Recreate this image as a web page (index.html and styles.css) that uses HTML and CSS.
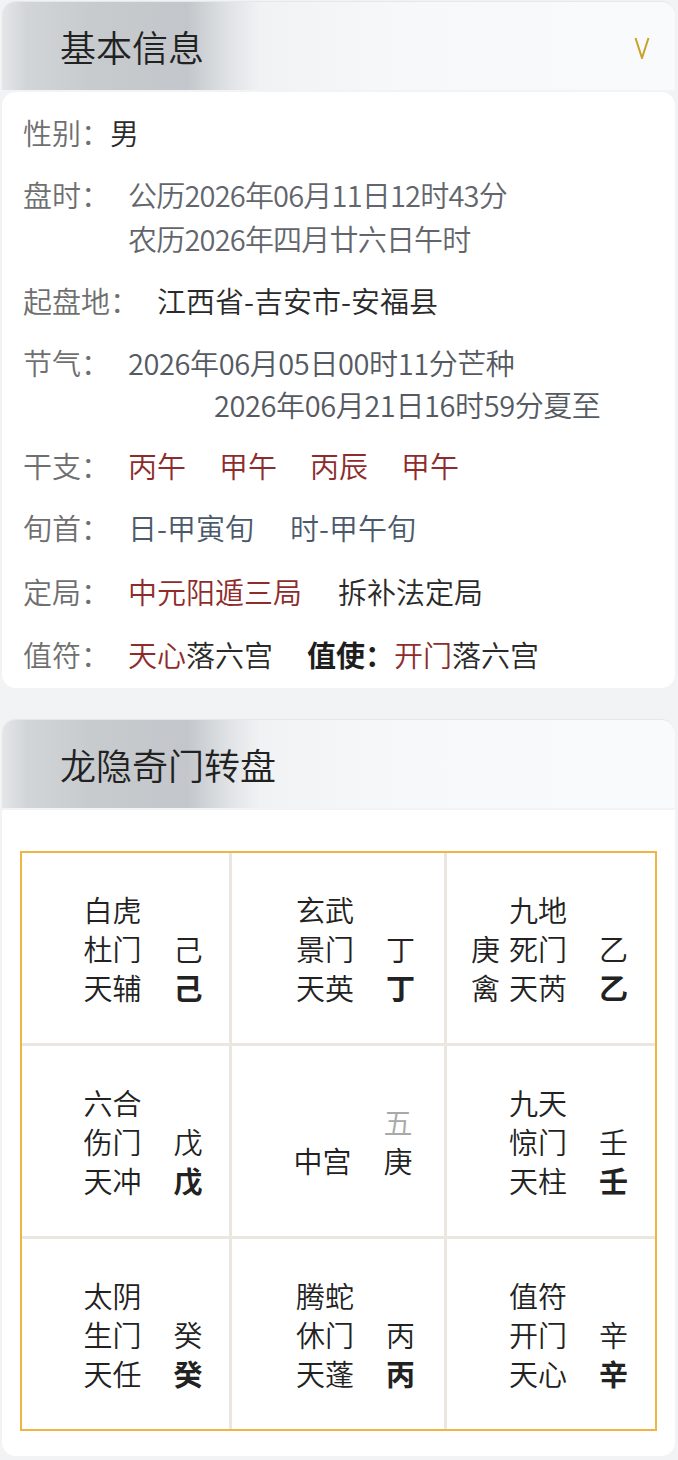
FILE: index.html
```html
<!DOCTYPE html>
<html lang="zh-CN">
<head>
<meta charset="utf-8">
<title>奇门</title>
<link rel="stylesheet" href="styles.css">
</head>
<body>
<div class="page">
  <section class="panel">
    <header class="panel-head">
      <h2>基本信息</h2>
      <svg class="chev" width="16" height="22" viewBox="0 0 16 22"><polyline points="1.5,1 8,21 14.5,1" fill="none" stroke="#c9a227" stroke-width="2"/></svg>
    </header>
    <div class="info">
      <div class="row"><span class="label">性别：</span><span class="val dark tight">男</span></div>
      <div class="row"><span class="label">盘时：</span>
        <div class="val grey date1"><div>公历2026年06月11日12时43分</div><div>农历2026年四月廿六日午时</div></div>
      </div>
      <div class="row"><span class="label">起盘地：</span><span class="val dark">江西省-吉安市-安福县</span></div>
      <div class="row"><span class="label">节气：</span>
        <div class="val slate date2"><div>2026年06月05日00时11分芒种</div><div class="indent">2026年06月21日16时59分夏至</div></div>
      </div>
      <div class="row"><span class="label">干支：</span>
        <div class="val red gz"><span>丙午</span><span>甲午</span><span>丙辰</span><span>甲午</span></div>
      </div>
      <div class="row"><span class="label">旬首：</span>
        <div class="val blue xs"><span>日-甲寅旬</span><span>时-甲午旬</span></div>
      </div>
      <div class="row row-dj"><span class="label">定局：</span>
        <div class="val dj"><span class="red">中元阳遁三局</span><span class="dark">拆补法定局</span></div>
      </div>
      <div class="row row-zf"><span class="label">值符：</span>
        <div class="val zf"><span><span class="red">天心</span><span class="dark">落六宫</span></span><span><b class="bold">值使：</b><span class="red">开门</span><span class="dark">落六宫</span></span></div>
      </div>
    </div>
  </section>

  <section class="panel board-panel">
    <header class="panel-head">
      <h2>龙隐奇门转盘</h2>
    </header>
    <div class="board-body">
      <div class="board">
        <div class="cell">
          <div class="ln"><span class="c1"></span><span class="c2">白虎</span><span class="c3"></span></div>
          <div class="ln"><span class="c1"></span><span class="c2">杜门</span><span class="c3">己</span></div>
          <div class="ln"><span class="c1"></span><span class="c2">天辅</span><span class="c3 b">己</span></div>
        </div>
        <div class="cell">
          <div class="ln"><span class="c1"></span><span class="c2">玄武</span><span class="c3"></span></div>
          <div class="ln"><span class="c1"></span><span class="c2">景门</span><span class="c3">丁</span></div>
          <div class="ln"><span class="c1"></span><span class="c2">天英</span><span class="c3 b">丁</span></div>
        </div>
        <div class="cell">
          <div class="ln"><span class="c1"></span><span class="c2">九地</span><span class="c3"></span></div>
          <div class="ln"><span class="c1">庚</span><span class="c2">死门</span><span class="c3">乙</span></div>
          <div class="ln"><span class="c1">禽</span><span class="c2">天芮</span><span class="c3 b">乙</span></div>
        </div>
        <div class="cell">
          <div class="ln"><span class="c1"></span><span class="c2">六合</span><span class="c3"></span></div>
          <div class="ln"><span class="c1"></span><span class="c2">伤门</span><span class="c3">戊</span></div>
          <div class="ln"><span class="c1"></span><span class="c2">天冲</span><span class="c3 b">戊</span></div>
        </div>
        <div class="cell">
          <div class="ln"><span class="c1"></span><span class="c2"></span><span class="c3 muted">五</span></div>
          <div class="ln"><span class="c1"></span><span class="c2">中宫</span><span class="c3">庚</span></div>
        </div>
        <div class="cell">
          <div class="ln"><span class="c1"></span><span class="c2">九天</span><span class="c3"></span></div>
          <div class="ln"><span class="c1"></span><span class="c2">惊门</span><span class="c3">壬</span></div>
          <div class="ln"><span class="c1"></span><span class="c2">天柱</span><span class="c3 b">壬</span></div>
        </div>
        <div class="cell">
          <div class="ln"><span class="c1"></span><span class="c2">太阴</span><span class="c3"></span></div>
          <div class="ln"><span class="c1"></span><span class="c2">生门</span><span class="c3">癸</span></div>
          <div class="ln"><span class="c1"></span><span class="c2">天任</span><span class="c3 b">癸</span></div>
        </div>
        <div class="cell">
          <div class="ln"><span class="c1"></span><span class="c2">腾蛇</span><span class="c3"></span></div>
          <div class="ln"><span class="c1"></span><span class="c2">休门</span><span class="c3">丙</span></div>
          <div class="ln"><span class="c1"></span><span class="c2">天蓬</span><span class="c3 b">丙</span></div>
        </div>
        <div class="cell">
          <div class="ln"><span class="c1"></span><span class="c2">值符</span><span class="c3"></span></div>
          <div class="ln"><span class="c1"></span><span class="c2">开门</span><span class="c3">辛</span></div>
          <div class="ln"><span class="c1"></span><span class="c2">天心</span><span class="c3 b">辛</span></div>
        </div>
      </div>
    </div>
  </section>
</div>
</body>
</html>
```

FILE: styles.css
```css
html, body {
  margin: 0;
  padding: 0;
}
body {
  background: #f2f3f5;
  font-family: "Noto Sans CJK SC", "Noto Sans", sans-serif;
  color: #222;
}
.page {
  padding: 2px 3px 4px 2px;
}
.panel-head {
  height: 88px;
  box-sizing: border-box;
  display: flex;
  align-items: center;
  justify-content: space-between;
  padding: 0 25px 0 58px;
  border-radius: 14px 14px 0 0;
  background: linear-gradient(90deg, #e4e6e8 0px, #d2d5d8 25px, #c8cbce 90px, #c3c6ca 185px, #dde0e3 222px, #f1f2f4 258px, #f7f8f9 400px, #f9fafb 100%);
  box-shadow: 0 -1px 1px rgba(0, 0, 0, 0.05);
}
.panel-head h2 {
  margin: 0;
  font-size: 36px;
  font-weight: 350;
  line-height: 1;
  color: #222;
}
.chev {
  display: block;
  margin-top: 3px;
}
.info {
  margin-top: 2px;
  background: #fff;
  border-radius: 14px;
  padding: 18px 20px 12px 21px;
  display: flex;
  flex-direction: column;
  gap: 18px;
}
.row {
  display: flex;
  align-items: flex-start;
  font-size: 29px;
  font-weight: 350;
  line-height: 44px;
}
.row-dj {
  margin-top: 2px;
}
.row-zf {
  margin-top: 1px;
}
.label {
  color: #6f6f6f;
  white-space: nowrap;
}
.val {
  margin-left: 18px;
  white-space: nowrap;
}
.val.tight {
  margin-left: 0;
}
.date1 {
  letter-spacing: -0.8px;
}
.date2 {
  letter-spacing: -0.4px;
}
.date2 .indent {
  padding-left: 86px;
  line-height: 41px;
}
.dark { color: #2a2a2a; }
.grey { color: #62666c; }
.slate { color: #555a62; }
.blue { color: #4b5a6b; }
.red { color: #8e2c2c; }
.bold {
  font-weight: 700;
  color: #1e1e1e;
}
.gz {
  display: flex;
  gap: 33px;
}
.xs {
  display: flex;
  gap: 36px;
}
.dj {
  display: flex;
  gap: 36px;
}
.zf {
  display: flex;
  gap: 34px;
}
.board-panel {
  margin-top: 32px;
}
.board-body {
  margin-top: 2px;
  background: #fff;
  border-radius: 0 0 14px 14px;
  padding: 41px 18px 25px 18px;
}
.board {
  display: grid;
  grid-template-columns: 207px 212px 1fr;
  grid-template-rows: repeat(3, 190px);
  gap: 3px;
  background: #ebe6e0;
  border: 2px solid #f0b440;
}
.cell {
  background: #fff;
  display: flex;
  flex-direction: column;
  align-items: center;
  justify-content: center;
  padding-right: 3px;
  font-size: 29px;
  font-weight: 350;
  line-height: 39px;
  color: #222;
}
.cell:nth-child(5) {
  padding-right: 8px;
}
.ln {
  display: flex;
  height: 39px;
}
.c1 {
  width: 38px;
}
.c2 {
  width: 90px;
}
.c3 {
  width: 29px;
}
.b {
  font-weight: 700;
}
.muted {
  color: #a9a9a9;
}
```
